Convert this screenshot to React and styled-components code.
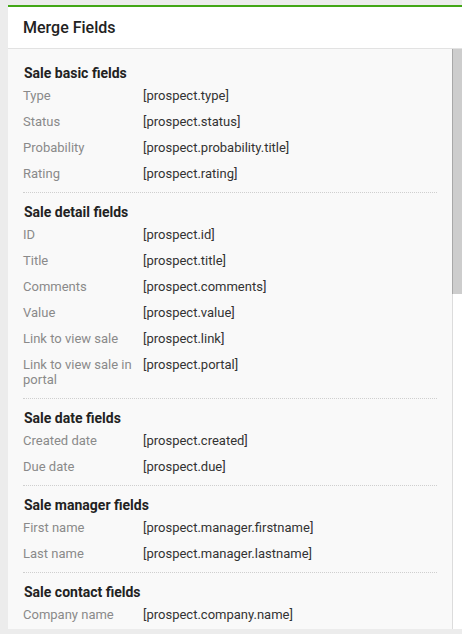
import React from 'react';
import styled, { createGlobalStyle } from 'styled-components';

const GlobalStyle = createGlobalStyle`
  html, body {
    margin: 0;
    padding: 0;
    background: #ececec;
  }
  body {
    padding: 5px 0 0 8px;
    font-family: Roboto, "Liberation Sans", Arial, sans-serif;
    overflow: hidden;
  }
`;

const Card = styled.div`
  width: 454px;
  height: 624px;
  display: flex;
  flex-direction: column;
  border-top: 2px solid #43a717;
  background: #fff;
  box-sizing: border-box;
`;

const Header = styled.div`
  height: 41px;
  flex: none;
  display: flex;
  align-items: center;
  padding: 0 15px;
  border-bottom: 1px solid #e2e2e2;
  font-size: 16px;
  font-weight: 500;
  color: #222;
`;

const Body = styled.div`
  flex: 1;
  min-height: 0;
  display: flex;
  background: #f9f9f9;
`;

const Content = styled.div`
  flex: 1;
  overflow: hidden;
  padding: 5px 15px 0;
`;

const Scrollbar = styled.div`
  width: 10px;
  flex: none;
  display: flex;
  flex-direction: column;
  background: #fff;
  border-left: 1px solid #dcdcdc;
  box-sizing: border-box;
`;

const Thumb = styled.div`
  height: 245px;
  background: #cdcdcd;
  border-left: 1px solid #a8a8a8;
  margin-left: -1px;
`;

const Section = styled.section`
  padding: 10px 0 5px;
  border-bottom: 1px dotted #cfcfcf;

  &:last-child {
    border-bottom: none;
  }
`;

const Heading = styled.h3`
  margin: 0 0 1px;
  padding-left: 1px;
  font-size: 14px;
  line-height: 18px;
  font-weight: 700;
  color: #222;
`;

const Row = styled.div`
  display: grid;
  grid-template-columns: 120px 1fr;
  padding: 5px 0 6px;
  font-size: 13px;
  line-height: 15px;
`;

const Label = styled.span`
  color: #8a8a8a;
  padding-right: 8px;
`;

const Value = styled.span`
  color: #333;
`;

const sections = [
  {
    title: 'Sale basic fields',
    rows: [
      ['Type', '[prospect.type]'],
      ['Status', '[prospect.status]'],
      ['Probability', '[prospect.probability.title]'],
      ['Rating', '[prospect.rating]'],
    ],
  },
  {
    title: 'Sale detail fields',
    rows: [
      ['ID', '[prospect.id]'],
      ['Title', '[prospect.title]'],
      ['Comments', '[prospect.comments]'],
      ['Value', '[prospect.value]'],
      ['Link to view sale', '[prospect.link]'],
      ['Link to view sale in portal', '[prospect.portal]'],
    ],
  },
  {
    title: 'Sale date fields',
    rows: [
      ['Created date', '[prospect.created]'],
      ['Due date', '[prospect.due]'],
    ],
  },
  {
    title: 'Sale manager fields',
    rows: [
      ['First name', '[prospect.manager.firstname]'],
      ['Last name', '[prospect.manager.lastname]'],
    ],
  },
  {
    title: 'Sale contact fields',
    rows: [['Company name', '[prospect.company.name]']],
  },
];

const App = () => (
  <>
    <GlobalStyle />
    <Card>
      <Header>Merge Fields</Header>
      <Body>
        <Content>
          {sections.map((s) => (
            <Section key={s.title}>
              <Heading>{s.title}</Heading>
              {s.rows.map(([label, value]) => (
                <Row key={label}>
                  <Label>{label}</Label>
                  <Value>{value}</Value>
                </Row>
              ))}
            </Section>
          ))}
        </Content>
        <Scrollbar>
          <Thumb />
        </Scrollbar>
      </Body>
    </Card>
  </>
);

export default App;
